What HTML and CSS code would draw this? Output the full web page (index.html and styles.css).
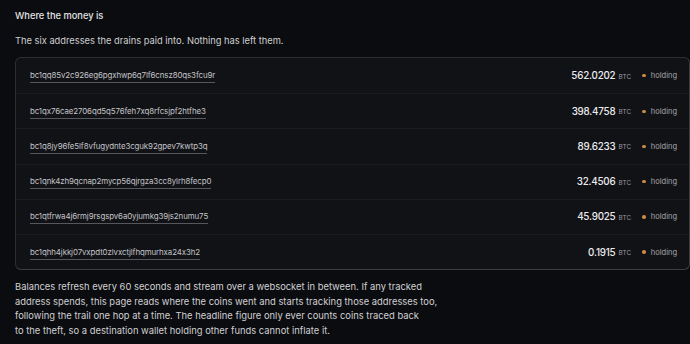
FILE: index.html
```html
<!DOCTYPE html>
<html lang="en">
<head>
<meta charset="utf-8">
<link rel="stylesheet" href="styles.css">
</head>
<body>
<main class="page">
  <h2 class="title">Where the money is</h2>
  <p class="lead">The six addresses the drains paid into. Nothing has left them.</p>
  <div class="card">
    <div class="row"><a class="addr">bc1qq85v2c926eg6pgxhwp6q7lf6cnsz80qs3fcu9r</a><span class="amt">562.0202</span><span class="unit">BTC</span><span class="dot"></span><span class="status">holding</span></div>
    <div class="row"><a class="addr">bc1qx76cae2706qd5q576feh7xq8rfcsjpf2htfhe3</a><span class="amt">398.4758</span><span class="unit">BTC</span><span class="dot"></span><span class="status">holding</span></div>
    <div class="row"><a class="addr">bc1q8jy96fe5lf8vfugydnte3cguk92gpev7kwtp3q</a><span class="amt">89.6233</span><span class="unit">BTC</span><span class="dot"></span><span class="status">holding</span></div>
    <div class="row"><a class="addr">bc1qnk4zh9qcnap2mycp56qjrgza3cc8ylrh8fecp0</a><span class="amt">32.4506</span><span class="unit">BTC</span><span class="dot"></span><span class="status">holding</span></div>
    <div class="row"><a class="addr">bc1qtfrwa4j6rmj9rsgspv6a0yjumkg39js2numu75</a><span class="amt">45.9025</span><span class="unit">BTC</span><span class="dot"></span><span class="status">holding</span></div>
    <div class="row"><a class="addr">bc1qhh4jkkj07vxpdt0zlvxctjlfhqmurhxa24x3h2</a><span class="amt">0.1915</span><span class="unit">BTC</span><span class="dot"></span><span class="status">holding</span></div>
  </div>
  <p class="note">Balances refresh every 60 seconds and stream over a websocket in between. If any tracked address spends, this page reads where the coins went and starts tracking those addresses too, following the trail one hop at a time. The headline figure only ever counts coins traced back<br>to the theft, so a destination wallet holding other funds cannot inflate it.</p>
</main>
</body>
</html>
```

FILE: styles.css
```css
* { box-sizing: border-box; }
html, body {
  margin: 0;
  background: #0b0c0f;
  color: #d8d8da;
  font-family: Inter, "Noto Sans", sans-serif;
}
.page {
  padding: 9px 0 0 15px;
}
.title {
  margin: 0;
  font-size: 9.3px;
  font-weight: 500;
  line-height: 14px;
  color: #e2e2e4;
}
.lead {
  margin: 11px 0 0;
  font-size: 9.3px;
  line-height: 14px;
  color: #cfcfd2;
}
.card {
  margin-top: 9px;
  border: 1px solid #2c2e33;
  border-right: 1px solid #3a3c41;
  border-bottom: 1px solid #3a3c41;
  border-radius: 6px;
  background: #111216;
  display: flex;
  flex-direction: column;
}
.row {
  height: 35.2px;
  display: flex;
  align-items: center;
  padding: 0 12px 0 14px;
  border-top: 1px solid #1a1b20;
}
.row:first-child { border-top: none; }
.addr {
  font-size: 7.9px;
  color: #c4c4c8;
  letter-spacing: -0.1px;
  padding-bottom: 2px;
  border-bottom: 1px solid #55575d;
  margin-top: 2px;
}
.amt {
  margin-left: auto;
  font-size: 9.8px;
  font-weight: 500;
  color: #ececee;
  letter-spacing: -0.2px;
}
.unit {
  font-size: 6.3px;
  color: #9a9aa0;
  margin-left: 3px;
  letter-spacing: 0.2px;
  margin-top: 2px;
}
.dot {
  width: 3.5px;
  height: 3.5px;
  border-radius: 50%;
  background: #c98a45;
  margin-left: 11px;
}
.status {
  font-size: 7.5px;
  color: #a8a8ae;
  margin-left: 5px;
}
.note {
  margin: 10px 0 0;
  max-width: 424px;
  font-size: 9.4px;
  line-height: 14.5px;
  color: #d0d0d3;
}
```
